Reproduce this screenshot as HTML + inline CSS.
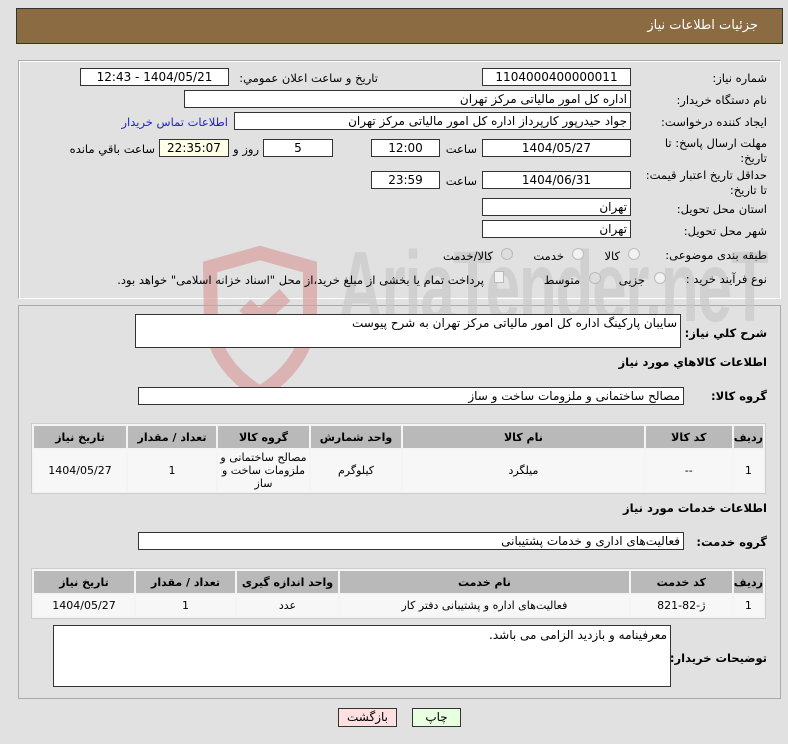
<!DOCTYPE html>
<html><head><meta charset="utf-8"><style>
*{box-sizing:border-box;margin:0;padding:0}
body{width:788px;height:744px;background:#e1e1e1;font-family:"DejaVu Sans","Liberation Sans",sans-serif;font-size:11px;color:#000;position:relative;overflow:hidden}
.a{position:absolute;white-space:nowrap}
.in{position:absolute;background:#fff;border:1px solid #333;height:18px;line-height:16px;text-align:center;font-size:12px;direction:rtl;padding:0 3px;overflow:hidden;white-space:nowrap}
.r{text-align:right}
.lb{position:absolute;direction:rtl;text-align:right;font-size:11.5px;white-space:nowrap}
.b{font-weight:bold}
.rad{position:absolute;width:12px;height:12px;border-radius:50%;border:1px solid #bbb;background:#f2f2f2}
table{position:absolute;border-collapse:separate;border-spacing:2px;background:#f4f4f4;border:1px solid #ccc;direction:rtl}
th{background:#b9b9b9;font-size:11px;font-weight:bold;height:22px}
td{background:#f7f7f7;text-align:center;font-size:11px}
</style></head><body>
<div class="a" style="left:16px;top:8px;width:767px;height:36px;background:#8b6b42;border:1px solid #333"></div>
<div class="lb" style="right:30px;top:18px;color:#fff;font-size:13px">جزئیات اطلاعات نیاز</div>
<div class="a" style="left:18px;top:60px;width:763px;height:239px;border:1px solid #aaa;border-right-color:#fff;border-bottom-color:#fff;box-shadow:inset 1px 1px 0 #fff"></div>
<div class="a" style="left:18px;top:305px;width:763px;height:394px;border:1px solid #aaa"></div>

<!-- watermark -->
<div class="a" style="left:0;top:230px;width:788px;height:180px;overflow:hidden">
<svg class="a" style="left:195px;top:15px" width="130" height="160" viewBox="0 0 130 160"><path d="M15 22 L65 8 L115 22 L115 75 Q110 120 65 148 Q22 122 16 80 Z" fill="none" stroke="#d9a0a0" stroke-width="14" opacity=".7"/><path d="M40 95 L90 50 M50 60 L75 85" stroke="#d9a0a0" stroke-width="16" opacity=".7"/></svg>
<div class="a" style="left:338px;top:0px;font-size:100px;font-weight:bold;color:#c9c9c9;opacity:.7;font-family:'Liberation Sans',sans-serif;transform:scaleX(.62);transform-origin:0 0;letter-spacing:-2px">AriaTender.neT</div>
</div>

<div class="lb" style="right:21px;top:71px">شماره نیاز:</div>
<div class="in" style="left:482px;top:68px;width:149px">1104000400000011</div>
<div class="lb" style="right:410px;top:71px">تاریخ و ساعت اعلان عمومي:</div>
<div class="in" style="left:80px;top:68px;width:149px">1404/05/21 - 12:43</div>

<div class="lb" style="right:21px;top:93px">نام دستگاه خریدار:</div>
<div class="in r" style="left:184px;top:90px;width:447px">اداره کل امور مالیاتی مرکز تهران</div>

<div class="lb" style="right:21px;top:115px">ایجاد کننده درخواست:</div>
<div class="in r" style="left:234px;top:112px;width:397px">جواد حیدرپور کارپرداز اداره کل امور مالیاتی مرکز تهران</div>
<div class="lb" style="right:560px;top:115px;color:#2222cc">اطلاعات تماس خریدار</div>

<div class="lb" style="right:21px;top:136px;line-height:15px">مهلت ارسال پاسخ: تا<br>تاریخ:</div>
<div class="in" style="left:482px;top:139px;width:149px">1404/05/27</div>
<div class="lb" style="right:311px;top:142px">ساعت</div>
<div class="in" style="left:371px;top:139px;width:69px">12:00</div>
<div class="in" style="left:263px;top:139px;width:70px">5</div>
<div class="lb" style="right:529px;top:142px">روز و</div>
<div class="in" style="left:159px;top:139px;width:70px;background:#ffffe8">22:35:07</div>
<div class="lb" style="right:633px;top:142px">ساعت باقي مانده</div>

<div class="lb" style="right:21px;top:168px;line-height:15px">حداقل تاريخ اعتبار قيمت:<br>تا تاريخ:</div>
<div class="in" style="left:482px;top:171px;width:149px">1404/06/31</div>
<div class="lb" style="right:311px;top:174px">ساعت</div>
<div class="in" style="left:371px;top:171px;width:69px">23:59</div>

<div class="lb" style="right:21px;top:202px">استان محل تحویل:</div>
<div class="in r" style="left:482px;top:198px;width:149px">تهران</div>
<div class="lb" style="right:21px;top:224px">شهر محل تحویل:</div>
<div class="in r" style="left:482px;top:220px;width:149px">تهران</div>

<div class="lb" style="right:21px;top:248px">طبقه بندی موضوعی:</div>
<div class="rad" style="left:628px;top:248px"></div><div class="lb" style="right:168px;top:249px">کالا</div>
<div class="rad" style="left:572px;top:248px"></div><div class="lb" style="right:224px;top:249px">خدمت</div>
<div class="rad" style="left:501px;top:248px;background:#ddd"></div><div class="lb" style="right:295px;top:249px">کالا/خدمت</div>

<div class="lb" style="right:21px;top:272px">نوع فرآیند خرید :</div>
<div class="rad" style="left:654px;top:272px"></div><div class="lb" style="right:143px;top:273px">جزیی</div>
<div class="rad" style="left:589px;top:272px;background:#ddd"></div><div class="lb" style="right:208px;top:273px">متوسط</div>
<div class="a" style="left:494px;top:271px;width:10px;height:12px;border:1px solid #bbb;background:#f2f2f2"></div>
<div class="lb" style="right:304px;top:273px">پرداخت تمام یا بخشی از مبلغ خرید،از محل "اسناد خزانه اسلامی" خواهد بود.</div>

<div class="lb b" style="right:21px;top:326px">شرح کلي نیاز:</div>
<div class="in r" style="left:135px;top:314px;width:546px;height:34px;text-align:right;line-height:16px;background:#fff">سایبان پارکینگ اداره کل امور مالیاتی مرکز تهران به شرح پیوست</div>
<div class="lb b" style="right:21px;top:355px">اطلاعات کالاهاي مورد نیاز</div>
<div class="lb b" style="right:21px;top:389px">گروه کالا:</div>
<div class="in r" style="left:138px;top:387px;width:546px">مصالح ساختمانی و ملزومات ساخت و ساز</div>

<table style="left:31px;top:423px;width:735px">
<tr><th style="width:26px">ردیف</th><th style="width:86px">کد کالا</th><th>نام کالا</th><th style="width:90px">واحد شمارش</th><th style="width:91px">گروه کالا</th><th style="width:88px">تعداد / مقدار</th><th style="width:92px">تاریخ نیاز</th></tr>
<tr style="height:41px"><td>1</td><td>--</td><td>میلگرد</td><td>کیلوگرم</td><td style="line-height:13px">مصالح ساختمانی و ملزومات ساخت و ساز</td><td>1</td><td>1404/05/27</td></tr>
</table>

<div class="lb b" style="right:21px;top:501px">اطلاعات خدمات مورد نیاز</div>
<div class="lb b" style="right:21px;top:535px">گروه خدمت:</div>
<div class="in r" style="left:138px;top:532px;width:546px">فعالیت‌های اداری و خدمات پشتیبانی</div>

<table style="left:31px;top:568px;width:735px">
<tr><th style="width:26px">ردیف</th><th style="width:101px">کد خدمت</th><th>نام خدمت</th><th style="width:101px">واحد اندازه گیری</th><th style="width:99px">تعداد / مقدار</th><th style="width:100px">تاریخ نیاز</th></tr>
<tr style="height:21px"><td>1</td><td>ژ-82-821</td><td>فعالیت‌های اداره و پشتیبانی دفتر کار</td><td>عدد</td><td>1</td><td>1404/05/27</td></tr>
</table>

<div class="lb b" style="right:21px;top:651px">توضیحات خریدار:</div>
<div class="in r" style="left:53px;top:625px;width:618px;height:62px;text-align:right;line-height:18px">معرفینامه و بازدید الزامی می باشد.</div>

<div class="a" style="left:338px;top:708px;width:59px;height:19px;background:#ffe0e0;border:1px solid #333;text-align:center;line-height:17px;font-size:12px">بازگشت</div>
<div class="a" style="left:412px;top:708px;width:49px;height:19px;background:#e8ffe0;border:1px solid #333;text-align:center;line-height:17px;font-size:12px">چاپ</div>
</body></html>
